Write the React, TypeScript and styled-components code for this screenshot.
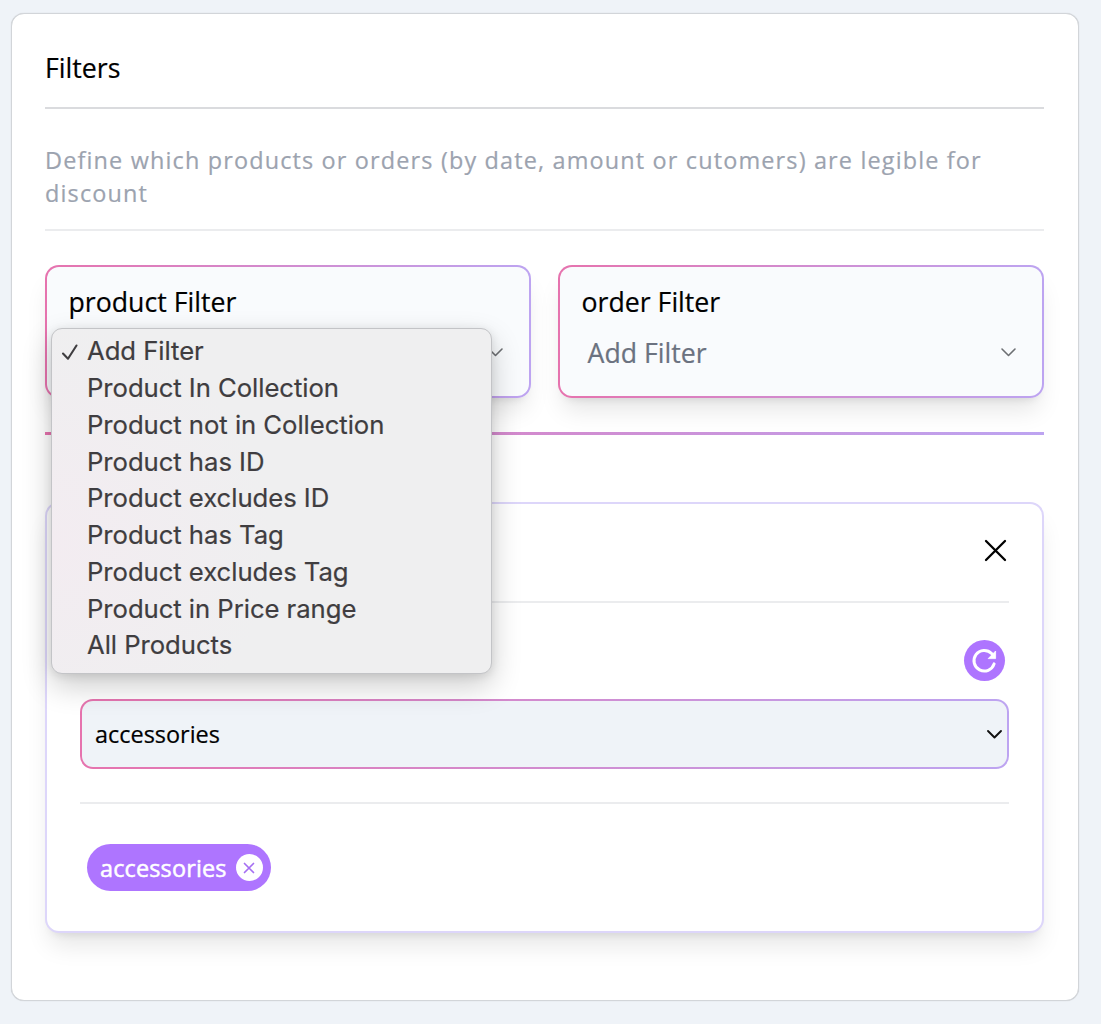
import React from "react";
import styled, { createGlobalStyle } from "styled-components";

const GlobalStyle = createGlobalStyle`
  * { box-sizing: border-box; }
  body {
    margin: 0;
    background: #eff3f8;
    color: #000;
    font-family: "Open Sans", "Noto Sans", sans-serif;
    -webkit-text-stroke-width: 0.2px;
  }
`;

const gradient = "linear-gradient(90deg, #e673ae 0%, #bda4f1 100%)";
const cardShadow = "0 17px 25px -5px rgba(0,0,0,.1), 0 7px 10px -7px rgba(0,0,0,.12)";

const Page = styled.main`
  height: 1024px;
  padding: 13px 22px 23px 11px;
  overflow: hidden;
`;

const Panel = styled.section`
  height: 988px;
  padding: 33px 34px 0 33px;
  background: #fff;
  border: 1px solid #d2d5d9;
  border-radius: 13px;
  box-shadow: 0 0 1px rgba(0, 0, 0, 0.2);
`;

const Title = styled.h1`
  margin: 0;
  height: 62px;
  border-bottom: 2px solid #dadbde;
  font-size: 26.7px;
  font-weight: 400;
  line-height: 42px;
`;

const Description = styled.p`
  margin: 0;
  height: 122px;
  padding-top: 35px;
  border-bottom: 2px solid #ebecee;
  color: #9ca3af;
  font-size: 23.45px;
  line-height: 33px;
  letter-spacing: 1.15px;
`;

const FilterGrid = styled.div`
  display: grid;
  grid-template-columns: 1fr 1fr;
  gap: 27px;
  margin-top: 34px;
  padding-bottom: 34px;
`;

const FilterCard = styled.div`
  position: relative;
  height: 133px;
  padding: 17px 22px 0 21.5px;
  border: 2px solid transparent;
  border-radius: 14px;
  background: linear-gradient(#f9fbfd, #f9fbfd) padding-box, ${gradient} border-box;
  box-shadow: ${cardShadow};
`;

const FilterName = styled.div`
  font-size: 26.7px;
  line-height: 36px;
`;

const FilterSelect = styled.div`
  display: flex;
  align-items: center;
  justify-content: space-between;
  height: 40px;
  margin-top: 12px;
  padding: 0 3px 0 6px;
  color: #6b7280;
  font-size: 26.7px;
`;

const Menu = styled.ul`
  position: absolute;
  z-index: 2;
  left: 4px;
  top: 61px;
  width: 441px;
  height: 346px;
  margin: 0;
  padding: 3.5px 0;
  list-style: none;
  border: 1px solid #c3c4c7;
  border-radius: 11px;
  background: radial-gradient(circle at 0 62%, #f3ecf1 0, #efeff0 45%), #efeff0;
  box-shadow: 0 12px 30px rgba(0, 0, 0, 0.2), 0 2px 10px rgba(0, 0, 0, 0.1);
`;

const MenuItem = styled.li`
  display: flex;
  align-items: center;
  height: 36.75px;
  color: #3f3d40;
  font-family: Inter, sans-serif;
  font-size: 25.7px;
  letter-spacing: -0.05px;
  white-space: nowrap;
`;

const CheckSlot = styled.span`
  display: flex;
  width: 35px;
  padding: 3px 0 0 9px;
`;

const Divider = styled.div`
  height: 3px;
  background: ${gradient};
`;

const RuleCard = styled.section`
  height: 431px;
  margin-top: 67px;
  padding: 0 33px 0 33px;
  border: 2px solid #ddd6fa;
  border-radius: 14px;
  background: #fff;
  box-shadow: ${cardShadow};
`;

const RuleHeader = styled.header`
  display: flex;
  align-items: center;
  justify-content: flex-end;
  height: 99px;
  padding-bottom: 4px;
  border-bottom: 2px solid #ebecee;
`;

const RuleTools = styled.div`
  display: flex;
  justify-content: flex-end;
  align-items: center;
  height: 96px;
  padding: 19px 4px 0 0;
`;

const RefreshButton = styled.button`
  display: grid;
  place-items: center;
  width: 41px;
  height: 41px;
  padding: 0;
  border: 0;
  border-radius: 50%;
  background: #ae75ff;
`;

const ValueSelect = styled.div`
  display: flex;
  align-items: center;
  justify-content: space-between;
  height: 70px;
  padding: 0 4px 0 13px;
  border: 2px solid transparent;
  border-radius: 13px;
  background: linear-gradient(#eff3f8, #eff3f8) padding-box, ${gradient} border-box;
  font-size: 23.45px;
`;

const TagRow = styled.div`
  margin-top: 33px;
  padding: 40px 7px;
  border-top: 2px solid #ebecee;
`;

const Tag = styled.span`
  display: inline-flex;
  align-items: center;
  gap: 9px;
  height: 47px;
  padding: 0 8px 0 13px;
  border-radius: 24px;
  background: #ae75ff;
  color: #fff;
  font-size: 23.45px;
  letter-spacing: 0.16px;
  -webkit-text-stroke-width: 0.5px;
`;

const TagRemove = styled.span`
  display: grid;
  place-items: center;
  width: 27px;
  height: 27px;
  border-radius: 50%;
  background: #fff;
`;

const Chevron = ({ color, weight }: { color: string; weight: number }) => (
  <svg width="17" height="11" viewBox="0 0 17 11" fill="none">
    <path d="M2 2l6.5 6.5L15 2" stroke={color} strokeWidth={weight} strokeLinecap="round" strokeLinejoin="round" />
  </svg>
);

const options = [
  "Add Filter",
  "Product In Collection",
  "Product not in Collection",
  "Product has ID",
  "Product excludes ID",
  "Product has Tag",
  "Product excludes Tag",
  "Product in Price range",
  "All Products",
];

export default function App() {
  return (
    <Page>
      <GlobalStyle />
      <Panel>
        <Title>Filters</Title>
        <Description>
          Define which products or orders (by date, amount or cutomers) are legible for discount
        </Description>
        <FilterGrid>
          <FilterCard>
            <FilterName>product Filter</FilterName>
            <FilterSelect>
              <span />
              <Chevron color="#6d6f73" weight={1.6} />
            </FilterSelect>
            <Menu>
              {options.map((option, i) => (
                <MenuItem key={option}>
                  <CheckSlot>
                    {i === 0 && (
                      <svg width="18" height="18" viewBox="0 0 18 18" fill="none">
                        <path d="M2 10.5l5 5.2L15.5 2.5" stroke="#3f3d40" strokeWidth="2.1" strokeLinecap="round" strokeLinejoin="round" />
                      </svg>
                    )}
                  </CheckSlot>
                  {option}
                </MenuItem>
              ))}
            </Menu>
          </FilterCard>
          <FilterCard>
            <FilterName>order Filter</FilterName>
            <FilterSelect>
              <span>Add Filter</span>
              <Chevron color="#6d6f73" weight={1.6} />
            </FilterSelect>
          </FilterCard>
        </FilterGrid>
        <Divider />
        <RuleCard>
          <RuleHeader>
            <svg width="27" height="27" viewBox="0 0 27 27" fill="none">
              <path d="M4 4l19 19M23 4L4 23" stroke="#000" strokeWidth="2.3" strokeLinecap="round" />
            </svg>
          </RuleHeader>
          <RuleTools>
            <RefreshButton aria-label="Refresh">
              <svg width="41" height="41" viewBox="0 0 41 41" fill="none">
                <path d="M30.1 23.9A10.3 10.3 0 1 1 27.6 13.5L29 15" stroke="#fff" strokeWidth="3" strokeLinecap="round" />
                <path d="M31.6 11v7.6h-7.4z" fill="#fff" stroke="#fff" strokeWidth="0.8" strokeLinejoin="round" />
              </svg>
            </RefreshButton>
          </RuleTools>
          <ValueSelect>
            accessories
            <Chevron color="#111" weight={1.9} />
          </ValueSelect>
          <TagRow>
            <Tag>
              accessories
              <TagRemove>
                <svg width="12" height="12" viewBox="0 0 12 12" fill="none">
                  <path d="M1.5 1.5l9 9M10.5 1.5l-9 9" stroke="#a56ff2" strokeWidth="1.7" strokeLinecap="round" />
                </svg>
              </TagRemove>
            </Tag>
          </TagRow>
        </RuleCard>
      </Panel>
    </Page>
  );
}
